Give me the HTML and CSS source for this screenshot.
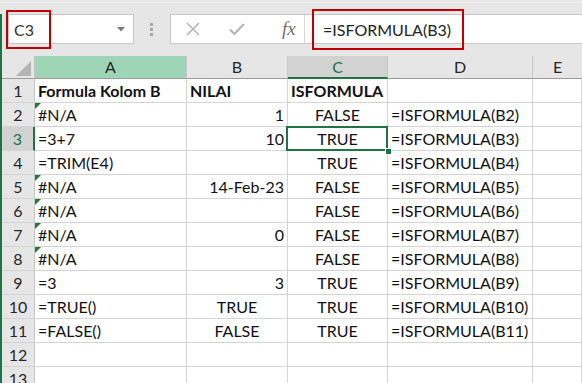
FILE: index.html
```html
<!DOCTYPE html>
<html lang="id">
<head>
    <meta charset="UTF-8">
    <title>ISFORMULA</title>
    <link rel="stylesheet" href="styles.css">
</head>
<body>
    <div class="app">
        <div class="topline"></div>
        <div class="main">
            <div class="formula-bar">
                <div class="name-box">
                    <span>C3</span>
                    <svg class="caret" width="8" height="5" viewBox="0 0 8 5"><polygon points="0,0 8,0 4,4.5" fill="#7a7a7a"/></svg>
                </div>
                <div class="grip"><i></i><i></i><i></i></div>
                <div class="formula-box">
                    <div class="fx-buttons">
                        <svg class="btn-icon" width="16" height="16" viewBox="0 0 16 16"><path d="M2 2 L14 14 M14 2 L2 14" stroke="#b5b5b5" stroke-width="1.6" fill="none"/></svg>
                        <svg class="btn-icon" width="18" height="16" viewBox="0 0 18 16"><path d="M2 8.5 L6.5 13 L16 3" stroke="#b5b5b5" stroke-width="2.2" fill="none"/></svg>
                        <span class="fx">fx</span>
                    </div>
                    <div class="formula-input">=ISFORMULA(B3)</div>
                </div>
            </div>

            <div class="sheet">
                <div class="corner"><svg width="15" height="15" viewBox="0 0 15 15"><polygon points="15,0 15,15 0,15" fill="#b4b4b4"/></svg></div>
                <div class="col-head col-a">A</div>
                <div class="col-head">B</div>
                <div class="col-head active">C</div>
                <div class="col-head">D</div>
                <div class="col-head last">E</div>

                <div class="row-head">1</div>
                <div class="cell bold">Formula Kolom B</div>
                <div class="cell bold">NILAI</div>
                <div class="cell bold">ISFORMULA</div>
                <div class="cell"></div>
                <div class="cell"></div>

                <div class="row-head">2</div>
                <div class="cell err">#N/A</div>
                <div class="cell num">1</div>
                <div class="cell center">FALSE</div>
                <div class="cell">=ISFORMULA(B2)</div>
                <div class="cell"></div>

                <div class="row-head active">3</div>
                <div class="cell">=3+7</div>
                <div class="cell num">10</div>
                <div class="cell center selected">TRUE</div>
                <div class="cell">=ISFORMULA(B3)</div>
                <div class="cell"></div>

                <div class="row-head">4</div>
                <div class="cell">=TRIM(E4)</div>
                <div class="cell num"></div>
                <div class="cell center">TRUE</div>
                <div class="cell">=ISFORMULA(B4)</div>
                <div class="cell"></div>

                <div class="row-head">5</div>
                <div class="cell err">#N/A</div>
                <div class="cell num">14-Feb-23</div>
                <div class="cell center">FALSE</div>
                <div class="cell">=ISFORMULA(B5)</div>
                <div class="cell"></div>

                <div class="row-head">6</div>
                <div class="cell err">#N/A</div>
                <div class="cell num"></div>
                <div class="cell center">FALSE</div>
                <div class="cell">=ISFORMULA(B6)</div>
                <div class="cell"></div>

                <div class="row-head">7</div>
                <div class="cell err">#N/A</div>
                <div class="cell num">0</div>
                <div class="cell center">FALSE</div>
                <div class="cell">=ISFORMULA(B7)</div>
                <div class="cell"></div>

                <div class="row-head">8</div>
                <div class="cell err">#N/A</div>
                <div class="cell num"></div>
                <div class="cell center">FALSE</div>
                <div class="cell">=ISFORMULA(B8)</div>
                <div class="cell"></div>

                <div class="row-head">9</div>
                <div class="cell">=3</div>
                <div class="cell num">3</div>
                <div class="cell center">TRUE</div>
                <div class="cell">=ISFORMULA(B9)</div>
                <div class="cell"></div>

                <div class="row-head">10</div>
                <div class="cell">=TRUE()</div>
                <div class="cell center">TRUE</div>
                <div class="cell center">TRUE</div>
                <div class="cell">=ISFORMULA(B10)</div>
                <div class="cell"></div>

                <div class="row-head">11</div>
                <div class="cell">=FALSE()</div>
                <div class="cell center">FALSE</div>
                <div class="cell center">TRUE</div>
                <div class="cell">=ISFORMULA(B11)</div>
                <div class="cell"></div>

                <div class="row-head">12</div>
                <div class="cell"></div>
                <div class="cell"></div>
                <div class="cell"></div>
                <div class="cell"></div>
                <div class="cell"></div>

                <div class="row-head">13</div>
                <div class="cell"></div>
                <div class="cell"></div>
                <div class="cell"></div>
                <div class="cell"></div>
                <div class="cell"></div>
            </div>
        </div>

        <div class="mark mark-name"></div>
        <div class="mark mark-formula"></div>
    </div>
</body>
</html>
```

FILE: styles.css
```css
body {
    margin: 0;
    padding: 0;
    font-family: 'Lato', 'Liberation Sans', sans-serif;
    background-color: #e6e6e6;
    overflow: hidden;
}

.app {
    position: relative;
    width: 582px;
    height: 383px;
    overflow: hidden;
}

.topline {
    height: 2px;
    border-bottom: 1px solid #f4f4f4;
}

.main {
    border-left: 2px solid #217346;
    height: 380px;
}

/* formula bar */
.formula-bar {
    display: flex;
    align-items: center;
    height: 30px;
    margin-top: 11px;
    padding-left: 6px;
}

.name-box {
    box-sizing: border-box;
    width: 126px;
    height: 30px;
    background-color: #fff;
    border: 1px solid #c6c6c6;
    display: flex;
    align-items: center;
    justify-content: space-between;
    padding: 0 8px 0 5px;
    font-size: 16px;
    color: #333;
}

.grip {
    display: flex;
    flex-direction: column;
    gap: 2px;
    margin: 0 17px 0 16px;
}

.grip i {
    display: block;
    width: 3px;
    height: 3px;
    background-color: #a6a6a6;
}

.formula-box {
    flex: 1;
    height: 30px;
    box-sizing: border-box;
    background-color: #fff;
    border: 1px solid #c6c6c6;
    border-right: none;
    display: flex;
    align-items: center;
}

.fx-buttons {
    width: 134px;
    height: 100%;
    box-sizing: border-box;
    border-right: 1px solid #d4d4d4;
    display: flex;
    align-items: center;
    padding-left: 14px;
}

.btn-icon {
    margin-right: 27px;
}

.btn-icon + .btn-icon {
    margin-right: 36px;
}

.fx {
    font-family: 'Liberation Serif', serif;
    font-style: italic;
    font-size: 19px;
    color: #707070;
}

.formula-input {
    padding-left: 18px;
    font-size: 16px;
    color: #222;
}

/* red annotation boxes */
.mark {
    position: absolute;
    border: 2px solid #c00000;
    box-sizing: border-box;
}

.mark-name {
    left: 6px;
    top: 10px;
    width: 45px;
    height: 39px;
}

.mark-formula {
    left: 312px;
    top: 9px;
    width: 152px;
    height: 41px;
}

/* sheet grid */
.sheet {
    margin-top: 12px;
    display: grid;
    grid-template-columns: 33px 152px 101px 100px 145px 1fr;
    grid-template-rows: 23px;
    grid-auto-rows: 24px;
    background-color: #fff;
    font-size: 16px;
    color: #111;
}

.corner,
.col-head,
.row-head {
    background-color: #e6e6e6;
    box-sizing: border-box;
}

.corner {
    border-bottom: 1px solid #9b9b9b;
    border-right: 1px solid #c6c6c6;
    display: flex;
    align-items: flex-end;
    justify-content: flex-end;
    padding: 0 3px 2px 0;
}

.col-head {
    border-right: 1px solid #c6c6c6;
    border-bottom: 1px solid #9b9b9b;
    text-align: center;
    line-height: 22px;
    color: #262626;
}

.col-head.col-a {
    background-color: #9fd5b7;
}

.col-head.active {
    background-color: #d2d2d2;
    color: #217346;
    border-bottom: 2px solid #217346;
}

.col-head.last {
    border-right: none;
}

.row-head {
    border-right: 1px solid #c6c6c6;
    border-bottom: 1px solid #d4d4d4;
    text-align: center;
    line-height: 24px;
    color: #262626;
}

.row-head.active {
    background-color: #d2d2d2;
    color: #217346;
    border-right: 2px solid #217346;
}

.cell {
    position: relative;
    box-sizing: border-box;
    border-right: 1px solid #d4d4d4;
    border-bottom: 1px solid #d4d4d4;
    padding: 0 3px;
    line-height: 24px;
    white-space: nowrap;
}

.cell.bold {
    font-weight: bold;
}

.cell.num {
    text-align: right;
}

.cell.center {
    text-align: center;
}

.cell.err::before {
    content: '';
    position: absolute;
    left: 0;
    top: 0;
    border-top: 6px solid #1e7b34;
    border-right: 6px solid transparent;
}

.cell.selected::after {
    content: '';
    position: absolute;
    left: -2px;
    top: -1px;
    right: -1px;
    bottom: -1px;
    border: 2px solid #217346;
}

.cell.selected::before {
    content: '';
    position: absolute;
    right: -5px;
    bottom: -5px;
    width: 5px;
    height: 5px;
    background-color: #217346;
    border: 1px solid #fff;
    z-index: 1;
}
```
